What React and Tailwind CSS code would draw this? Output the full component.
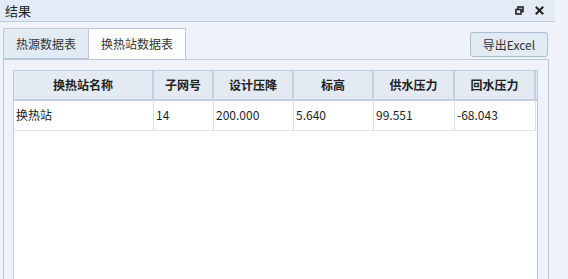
import React from 'react';

const columns = [
  { title: '换热站名称', width: 'w-[140px]' },
  { title: '子网号', width: 'w-[60px]' },
  { title: '设计压降', width: 'w-[80px]' },
  { title: '标高', width: 'w-[80px]' },
  { title: '供水压力', width: 'w-[81px]' },
  { title: '回水压力', width: 'w-[81px]' },
];

const rows = [['换热站', '14', '200.000', '5.640', '99.551', '-68.043']];

const RestoreIcon = () => (
  <svg width="9" height="9" viewBox="0 0 9 9" fill="none" stroke="#222" strokeWidth="1.6">
    <rect x="3" y="1" width="5" height="4.5" />
    <rect x="1" y="3.5" width="5" height="4.5" fill="#e3ebf6" />
  </svg>
);

const CloseIcon = () => (
  <svg width="9" height="9" viewBox="0 0 9 9" stroke="#222" strokeWidth="2" strokeLinecap="square">
    <path d="M1.5 1.5 L7.5 7.5 M7.5 1.5 L1.5 7.5" />
  </svg>
);

export default function App() {
  return (
    <div
      className="w-[568px] h-[279px] bg-[#eff3f9] overflow-hidden flex flex-col text-[#222]"
      style={{ fontFamily: '"Noto Sans CJK SC", "Noto Sans", sans-serif' }}
    >
      {/* title bar */}
      <div className="w-[555px] h-[22px] shrink-0 flex items-center justify-between bg-[#e3ebf6] border-b border-[#bccbdc] pl-[5px] pr-[11px]">
        <span className="text-[13px] leading-none">结果</span>
        <div className="flex items-center gap-[11px]">
          <RestoreIcon />
          <CloseIcon />
        </div>
      </div>

      {/* tabs + action */}
      <div className="flex items-end justify-between pl-[3px] pr-[20px] pt-[6px] shrink-0">
        <div className="flex">
          <div className="w-[86px] h-[31px] flex items-center justify-center bg-[#e2eaf4] border border-[#bccbdc] border-b-[#b3c3d6] text-[12px] text-[#333]">
            热源数据表
          </div>
          <div className="w-[97px] h-[31px] flex items-center justify-center bg-white border border-l-0 border-b-0 border-[#bccbdc] text-[12px] text-[#333]">
            换热站数据表
          </div>
        </div>
        <button className="w-[78px] h-[25px] mb-[2px] rounded-[3px] border border-[#a9bdd3] bg-[#e2eaf4] text-[12px] text-[#333] flex items-center justify-center">
          导出Excel
        </button>
      </div>

      {/* panel */}
      <div className="flex-1 ml-[3px] w-[546px] border border-[#bccbdc] border-b-0 pl-[9px] pr-[10px] pt-[10px] flex">
        <div className="flex-1 bg-white border border-[#bccbdc] border-b-0 overflow-hidden">
          <div className="flex h-[30px] bg-[#e3eaf4] border-b-2 border-[#c2d0df]">
            {columns.map((c) => (
              <div
                key={c.title}
                className={`${c.width} shrink-0 flex items-center justify-center border-r-2 border-[#c2d0df] text-[12px] font-bold`}
              >
                {c.title}
              </div>
            ))}
            <div className="flex-1" />
          </div>
          {rows.map((r, i) => (
            <div key={i} className="flex h-[30px] border-b border-[#d9e1eb]">
              {r.map((v, j) => (
                <div
                  key={j}
                  className={`${columns[j].width} shrink-0 flex items-center px-[2px] pb-[2px] border-r border-[#d9e1eb] text-[12px]`}
                >
                  {v}
                </div>
              ))}
              <div className="flex-1" />
            </div>
          ))}
        </div>
      </div>
    </div>
  );
}
